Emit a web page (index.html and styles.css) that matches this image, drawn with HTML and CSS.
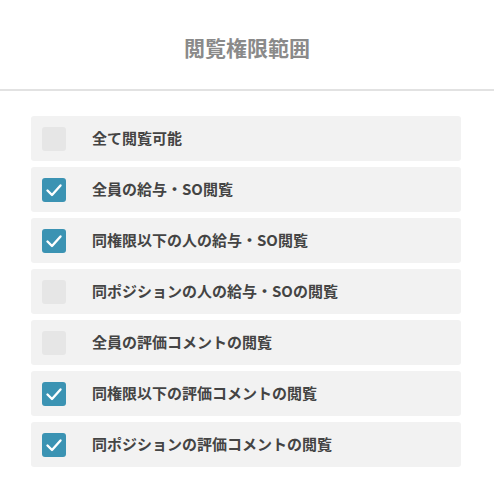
FILE: index.html
```html
<!DOCTYPE html>
<html lang="ja">
<head>
<meta charset="utf-8">
<link rel="stylesheet" href="styles.css">
</head>
<body>
<div class="header"><h1 class="title">閲覧権限範囲</h1></div>
<ul class="list">
  <li class="row"><span class="box"></span><span class="label">全て閲覧可能</span></li>
  <li class="row"><span class="box checked"><svg viewBox="0 0 24 24"><polyline points="5.5,12.5 10,17 18.5,7.5"/></svg></span><span class="label">全員の給与・SO閲覧</span></li>
  <li class="row"><span class="box checked"><svg viewBox="0 0 24 24"><polyline points="5.5,12.5 10,17 18.5,7.5"/></svg></span><span class="label">同権限以下の人の給与・SO閲覧</span></li>
  <li class="row"><span class="box"></span><span class="label">同ポジションの人の給与・SOの閲覧</span></li>
  <li class="row"><span class="box"></span><span class="label">全員の評価コメントの閲覧</span></li>
  <li class="row"><span class="box checked"><svg viewBox="0 0 24 24"><polyline points="5.5,12.5 10,17 18.5,7.5"/></svg></span><span class="label">同権限以下の評価コメントの閲覧</span></li>
  <li class="row"><span class="box checked"><svg viewBox="0 0 24 24"><polyline points="5.5,12.5 10,17 18.5,7.5"/></svg></span><span class="label">同ポジションの評価コメントの閲覧</span></li>
</ul>
</body>
</html>
```
FILE: styles.css
```css
html, body {
  margin: 0;
  padding: 0;
  background: #fff;
  font-family: "Noto Sans CJK JP", "Noto Sans", sans-serif;
}
.header {
  height: 89px;
  border-bottom: 2px solid #e2e2e2;
  display: flex;
  align-items: center;
  justify-content: center;
}
.title {
  margin: 0;
  font-size: 21px;
  font-weight: 700;
  color: #8a8a8a;
  line-height: 1;
  padding-top: 6px;
}
.list {
  list-style: none;
  margin: 25px 33px 0 31px;
  padding: 0;
  display: flex;
  flex-direction: column;
  gap: 6px;
}
.row {
  height: 45px;
  background: #f2f2f2;
  border-radius: 3px;
  display: flex;
  align-items: center;
  padding-left: 11px;
}
.box {
  width: 24px;
  height: 24px;
  border-radius: 3px;
  background: #e6e6e6;
  flex: none;
  display: flex;
}
.box.checked {
  background: #3b93b3;
}
.box svg {
  width: 24px;
  height: 24px;
  fill: none;
  stroke: #fff;
  stroke-width: 2.4;
  stroke-linecap: round;
  stroke-linejoin: round;
}
.label {
  margin-left: 26px;
  font-size: 15px;
  font-weight: 700;
  color: #444;
  line-height: 1;
  padding-bottom: 2px;
}
```
